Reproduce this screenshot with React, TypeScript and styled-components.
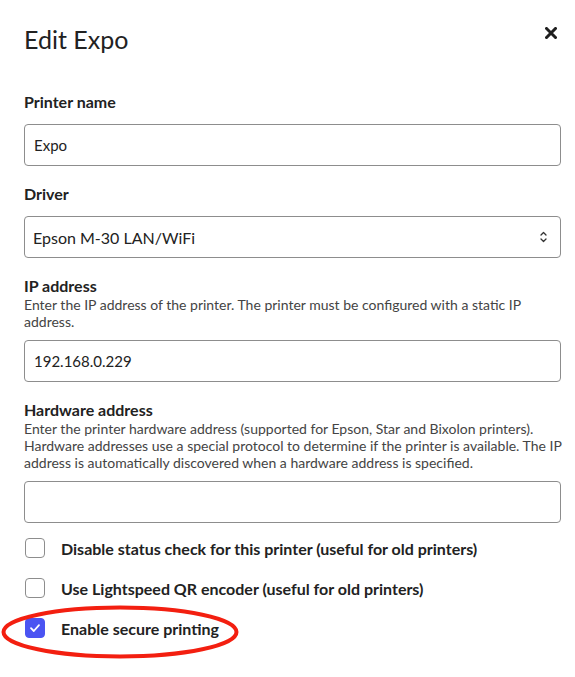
import React from "react";
import styled, { createGlobalStyle } from "styled-components";

const GlobalStyle = createGlobalStyle`
  html, body {
    margin: 0;
    padding: 0;
    background: #ffffff;
  }
  body {
    font-family: Lato, "Noto Sans", "Liberation Sans", sans-serif;
    color: #222222;
  }
  * { box-sizing: border-box; }
`;

const Modal = styled.div`
  width: 575px;
  padding: 24px 14px 24px 24px;
  background: #fff;
`;

const Header = styled.div`
  display: flex;
  justify-content: space-between;
  align-items: flex-start;
  margin-bottom: 38px;
`;

const Title = styled.h2`
  margin: 0;
  font-size: 25px;
  line-height: 30px;
  font-weight: 400;
  color: #222;
`;

const CloseButton = styled.button`
  display: flex;
  align-items: center;
  justify-content: center;
  margin: 3px 4px 0 0;
  padding: 0;
  width: 12px;
  height: 12px;
  border: none;
  background: none;
  color: #1f1f1f;
  cursor: pointer;
`;

const Form = styled.div`
  display: flex;
  flex-direction: column;
  gap: 18px;
`;

const Field = styled.div`
  display: flex;
  flex-direction: column;
`;

const Label = styled.label<{ $hasHint?: boolean }>`
  font-size: 16px;
  line-height: 20px;
  font-weight: 700;
  color: #222;
  margin-bottom: ${(p) => (p.$hasHint ? "0" : "12px")};
`;

const Hint = styled.div`
  font-size: 14px;
  line-height: 17px;
  color: #444;
  margin: 0 -14px 10px 0;
`;

const TextInput = styled.input`
  width: 100%;
  height: 42px;
  padding: 0 9px;
  border: 1px solid #8d8d8d;
  border-radius: 4px;
  font-family: Lato, "Noto Sans", sans-serif;
  font-size: 15px;
  color: #222;
  background: #fff;
  outline: none;
`;

const SelectWrap = styled.div`
  position: relative;
  width: 100%;
`;

const Select = styled.select`
  width: 100%;
  height: 42px;
  padding: 0 30px 0 8px;
  border: 1px solid #8d8d8d;
  border-radius: 4px;
  font-family: Lato, "Noto Sans", sans-serif;
  font-size: 16px;
  color: #222;
  background: #fff;
  appearance: none;
  -webkit-appearance: none;
  outline: none;
`;

const SelectIcon = styled.svg`
  position: absolute;
  right: 14px;
  top: 15px;
  pointer-events: none;
`;

const Checks = styled.div`
  display: flex;
  flex-direction: column;
  gap: 20px;
  margin-top: -3px;
`;

const CheckRow = styled.label`
  position: relative;
  display: flex;
  align-items: center;
  gap: 16px;
  min-height: 20px;
  padding-left: 1px;
  font-size: 16px;
  font-weight: 700;
  color: #222;
`;

const Box = styled.span<{ $checked?: boolean }>`
  display: flex;
  align-items: center;
  justify-content: center;
  flex: none;
  width: 20px;
  height: 20px;
  border-radius: 4px;
  border: 1px solid ${(p) => (p.$checked ? "#4b54f2" : "#8d8d8d")};
  background: ${(p) => (p.$checked ? "#4b54f2" : "#fff")};
`;

const Highlight = styled.svg`
  position: absolute;
  left: -23px;
  top: -13px;
  pointer-events: none;
  overflow: visible;
`;

function CheckItem({ label, checked, circled }: { label: string; checked?: boolean; circled?: boolean }) {
  return (
    <CheckRow>
      <Box $checked={checked}>
        {checked && (
          <svg width="12" height="10" viewBox="0 0 12 10">
            <path d="M2 5.2 L4.8 8 L10 2.2" fill="none" stroke="#fff" strokeWidth="1.8" strokeLinecap="round" strokeLinejoin="round" />
          </svg>
        )}
      </Box>
      {label}
      {circled && (
        <Highlight width="238" height="54" viewBox="0 0 238 54">
          <ellipse cx="119" cy="27" rx="116.5" ry="24.5" fill="none" stroke="#f31f10" strokeWidth="4" />
        </Highlight>
      )}
    </CheckRow>
  );
}

export default function App() {
  return (
    <>
      <GlobalStyle />
      <Modal>
        <Header>
          <Title>Edit Expo</Title>
          <CloseButton aria-label="Close">
            <svg width="12" height="12" viewBox="0 0 12 12">
              <path d="M1.5 1.5 L10.5 10.5 M10.5 1.5 L1.5 10.5" stroke="currentColor" strokeWidth="3" strokeLinecap="square" />
            </svg>
          </CloseButton>
        </Header>
        <Form>
          <Field>
            <Label>Printer name</Label>
            <TextInput defaultValue="Expo" />
          </Field>
          <Field>
            <Label>Driver</Label>
            <SelectWrap>
              <Select defaultValue="m30">
                <option value="m30">Epson M-30 LAN/WiFi</option>
              </Select>
              <SelectIcon width="7" height="12" viewBox="0 0 7 12">
                <path d="M1 4 L3.5 1.5 L6 4 M1 8 L3.5 10.5 L6 8" fill="none" stroke="#333" strokeWidth="1.3" strokeLinecap="round" strokeLinejoin="round" />
              </SelectIcon>
            </SelectWrap>
          </Field>
          <Field>
            <Label $hasHint>IP address</Label>
            <Hint>
              Enter the IP address of the printer. The printer must be configured with a static IP
              <br />
              address.
            </Hint>
            <TextInput defaultValue="192.168.0.229" />
          </Field>
          <Field>
            <Label $hasHint>Hardware address</Label>
            <Hint>
              Enter the printer hardware address (supported for Epson, Star and Bixolon printers). Hardware addresses use a
              special protocol to determine if the printer is available. The IP address is automatically discovered when a
              hardware address is specified.
            </Hint>
            <TextInput defaultValue="" />
          </Field>
          <Checks>
            <CheckItem label="Disable status check for this printer (useful for old printers)" />
            <CheckItem label="Use Lightspeed QR encoder (useful for old printers)" />
            <CheckItem label="Enable secure printing" checked circled />
          </Checks>
        </Form>
      </Modal>
    </>
  );
}
